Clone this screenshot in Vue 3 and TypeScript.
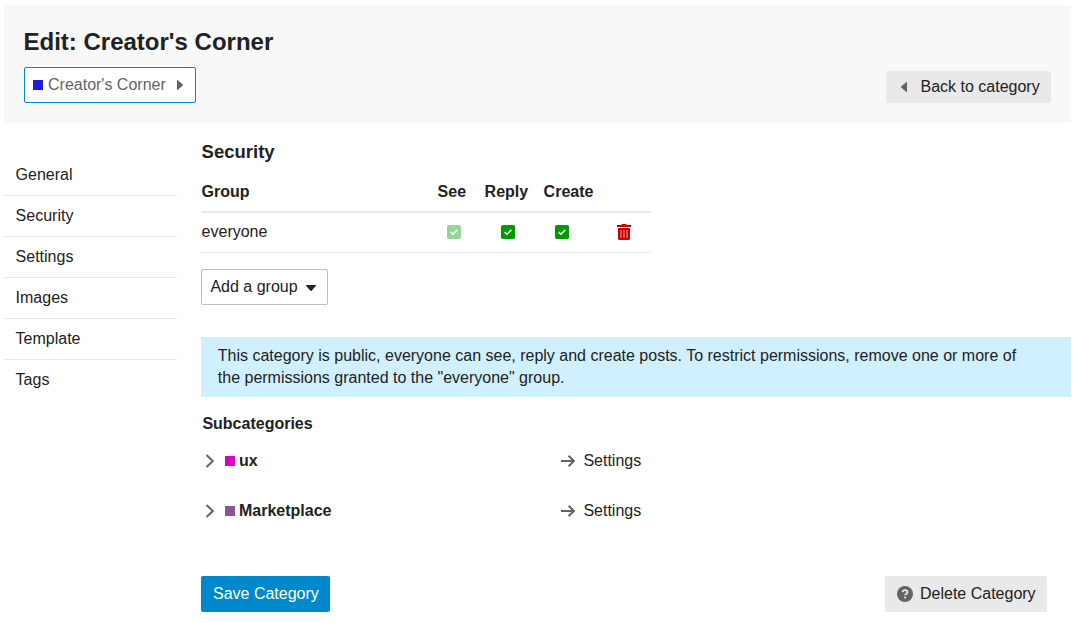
<script setup lang="ts">
interface Permission {
  name: string
  inherited: boolean
}

interface Subcategory {
  name: string
  color: string
}

const tabs: string[] = ['General', 'Security', 'Settings', 'Images', 'Template', 'Tags']

const permissions: Permission[] = [
  { name: 'See', inherited: true },
  { name: 'Reply', inherited: false },
  { name: 'Create', inherited: false },
]

const subcategories: Subcategory[] = [
  { name: 'ux', color: '#df00c0' },
  { name: 'Marketplace', color: '#8f519c' },
]
</script>

<template>
  <div class="page">
    <header class="header">
      <div>
        <h1>Edit: Creator's Corner</h1>
        <button class="chooser">
          <span class="badge badge-blue"></span>
          <span>Creator's Corner</span>
          <svg class="caret-right" viewBox="0 0 6 10"><path d="M0 .6v8.8q0 1 .9.4L5.8 5.6q.4-.6 0-1.2L.9.2Q0-.4 0 .6z" /></svg>
        </button>
      </div>
      <button class="btn back">
        <svg class="caret-left" viewBox="0 0 6 10"><path d="M6 .6v8.8q0 1-.9.4L.2 5.6q-.4-.6 0-1.2L5.1.2Q6-.4 6 .6z" /></svg>
        <span>Back to category</span>
      </button>
    </header>

    <div class="body">
      <nav>
        <a v-for="tab in tabs" :key="tab">{{ tab }}</a>
      </nav>

      <main>
        <h2>Security</h2>

        <div class="permissions">
          <div class="row head">
            <span>Group</span>
            <span v-for="p in permissions" :key="p.name">{{ p.name }}</span>
          </div>
          <div class="row">
            <span>everyone</span>
            <svg
              v-for="p in permissions"
              :key="p.name"
              class="check"
              :class="{ inherited: p.inherited }"
              viewBox="0 0 14 14"
            >
              <rect width="14" height="14" rx="1.8" />
              <path d="M3.7 7.1l2.2 2.2 4.4-4.4" />
            </svg>
            <svg class="trash" viewBox="0 0 14 16">
              <path d="M0 1h4.2L5 0h4l.8 1H14v2H0zM1 4h12v10.5q0 1.5-1.5 1.5h-9Q1 16 1 14.5z" />
              <path class="slots" d="M4 6v8M7 6v8M10 6v8" />
            </svg>
          </div>
        </div>

        <button class="add">
          <span>Add a group</span>
          <svg class="caret-down" viewBox="0 0 10 6"><path d="M.6 0h8.8q1 0 .4.9L5.6 5.8q-.6.4-1.2 0L.2.9Q-.4 0 .6 0z" /></svg>
        </button>

        <p class="notice">
          This category is public, everyone can see, reply and create posts. To restrict permissions, remove one or more of the permissions granted to the "everyone" group.
        </p>

        <h3>Subcategories</h3>
        <div v-for="s in subcategories" :key="s.name" class="sub">
          <svg class="chevron" viewBox="0 0 10 14"><path d="M1.5 1l6.3 6-6.3 6" /></svg>
          <span class="badge" :style="{ background: s.color }"></span>
          <b>{{ s.name }}</b>
          <a class="settings">
            <svg class="arrow" viewBox="0 0 14 12"><path d="M0 6h12.6M7.6.8L12.9 6l-5.3 5.2" /></svg>
            <span>Settings</span>
          </a>
        </div>

        <footer>
          <button class="btn save">Save Category</button>
          <button class="btn delete">
            <svg class="help" viewBox="0 0 16 16">
              <circle cx="8" cy="8" r="8" />
              <path d="M5.6 6.2C5.8 4.8 6.8 4.2 8 4.2c1.4 0 2.5.8 2.5 2 0 1.5-2.3 1.6-2.3 3.1" />
              <rect x="7.1" y="10.4" width="2.1" height="2" rx=".9" />
            </svg>
            <span>Delete Category</span>
          </button>
        </footer>
      </main>
    </div>
  </div>
</template>

<style>
body {
  background: #fff;
}
</style>

<style scoped>
.page {
  box-sizing: border-box;
  height: 623px;
  padding: 5px 3px 0 4px;
  overflow: hidden;
  color: #222;
  font: 16px/22px Arial, "Liberation Sans", sans-serif;
}
h1,
h2,
h3,
p {
  margin: 0;
}
button {
  box-sizing: border-box;
  display: flex;
  align-items: center;
  height: 36px;
  margin: 0;
  padding: 0;
  border: 0;
  border-radius: 2px;
  color: #222;
  font: inherit;
  white-space: nowrap;
}
svg {
  display: block;
  flex: none;
}
.header {
  box-sizing: border-box;
  display: flex;
  justify-content: space-between;
  height: 118px;
  padding: 22px 20px 0;
  background: #f8f8f8;
}
h1 {
  margin-left: -0.5px;
  font-size: 24px;
  line-height: 30px;
}
.chooser {
  width: 172px;
  margin-top: 10px;
  padding: 0 0 0 8px;
  border: 1px solid #0088cc;
  background: #fff;
  color: #646464;
}
.badge {
  flex: none;
  width: 10px;
  height: 10px;
}
.badge-blue {
  margin-right: 5px;
}
.badge-blue {
  background: #1f1bdb;
}
.caret-right {
  width: 6px;
  height: 10px;
  margin-left: 11px;
  fill: #646464;
}
.btn {
  background: #e9e9e9;
}
.back {
  width: 165px;
  height: 32px;
  margin-top: 44px;
  padding-left: 15px;
}
.caret-left {
  width: 6px;
  height: 10px;
  margin-right: 13.5px;
  fill: #646464;
}
.body {
  display: flex;
  gap: 24px;
}
nav {
  flex: none;
  width: 173px;
  padding-top: 32px;
}
nav a {
  display: block;
  height: 40px;
  padding-left: 11.6px;
  border-bottom: 1px solid #e9e9e9;
  line-height: 40px;
}
nav a:last-child {
  border: 0;
}
main {
  flex: 1;
  padding-top: 18px;
}
h2 {
  padding-left: 0.6px;
  font-size: 18.5px;
}
.permissions {
  width: 450px;
  margin-top: 8px;
}
.row {
  box-sizing: border-box;
  display: grid;
  grid-template-columns: 236px 47px 59px 72px 1fr;
  align-items: center;
  height: 40px;
  padding: 0 0 1px 0.6px;
  border-bottom: 1px solid #e9e9e9;
}
.head {
  height: 42px;
  padding-top: 2px;
  padding-bottom: 0;
  border-bottom-width: 2px;
  font-weight: bold;
}
.row:not(.head) {
  grid-template-columns: 245.4px 54px 54px 55px 1fr;
}
.check {
  width: 14px;
  height: 14px;
  fill: #090;
}
.check path {
  fill: none;
  stroke: #fff;
  stroke-width: 1.5;
}
.inherited {
  opacity: 0.4;
}
.trash {
  width: 14px;
  height: 16px;
  margin-left: 7px;
  fill: #c80001;
}
.trash .slots {
  stroke: #e88080;
  stroke-width: 1.2;
}
.add {
  width: 127px;
  margin-top: 16px;
  padding: 0 0 0 8.4px;
  border: 1px solid #bdbdbd;
  background: #fff;
}
.caret-down {
  width: 10px;
  height: 6px;
  margin: 2px 0 0 8.6px;
  fill: #222;
}
.notice {
  height: 44px;
  margin-top: 32px;
  padding: 8px 40px 8px 16.8px;
  background: #d1f0ff;
}
h3 {
  margin: 16px 0 1px 1.4px;
  font-size: 16px;
}
.sub {
  display: flex;
  align-items: center;
  height: 50px;
  padding-left: 4px;
}
.chevron {
  width: 10px;
  height: 14px;
  margin-right: 10px;
}
.chevron path,
.arrow path {
  fill: none;
  stroke: #646464;
  stroke-width: 2;
}
.sub b {
  width: 322px;
  margin-left: 4px;
}
.settings {
  display: flex;
  align-items: center;
}
.arrow {
  width: 14px;
  height: 12px;
  margin-right: 8.4px;
}
footer {
  display: flex;
  justify-content: space-between;
  margin-top: 40px;
  padding-right: 24px;
}
.save {
  width: 129px;
  padding-left: 12px;
  background: #08c;
  color: #fff;
}
.delete {
  width: 162px;
  padding-left: 12px;
}
.help {
  width: 16px;
  height: 16px;
  margin-right: 7px;
  fill: #646464;
}
.help path {
  fill: none;
  stroke: #e9e9e9;
  stroke-width: 1.8;
}
.help rect {
  fill: #e9e9e9;
}
</style>
